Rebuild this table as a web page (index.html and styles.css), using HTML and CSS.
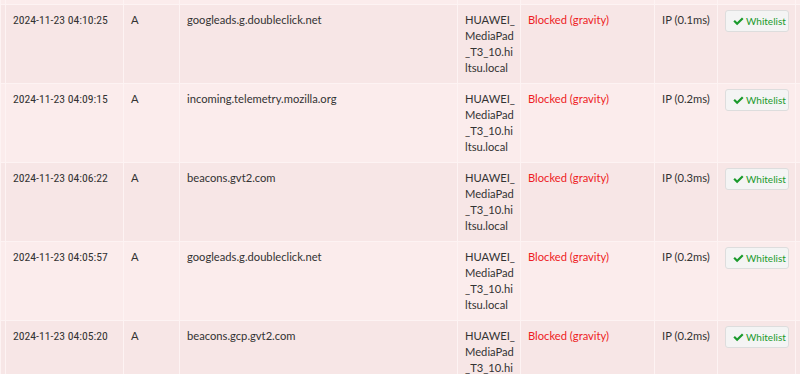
FILE: index.html
```html
<!DOCTYPE html>
<html>
<head>
<meta charset="utf-8">
<link rel="stylesheet" href="styles.css">
</head>
<body>
<table class="log">
  <colgroup>
    <col class="c-edge"><col class="c-time"><col class="c-type"><col class="c-domain"><col class="c-client"><col class="c-status"><col class="c-reply"><col class="c-action"><col class="c-rest">
  </colgroup>
  <tbody>
    <tr class="even stub"><td></td><td></td><td></td><td></td><td></td><td></td><td></td><td></td><td></td></tr>
    <tr class="odd">
      <td></td><td class="time">2024-11-23 04:10:25</td><td>A</td><td>googleads.g.doubleclick.net</td>
      <td class="client">HUAWEI_<br>MediaPad<br>_T3_10.hi<br>ltsu.local</td>
      <td class="blocked">Blocked (gravity)</td><td>IP (0.1ms)</td>
      <td class="act"><button class="wl"><svg class="chk" viewBox="0 0 12 9"><path d="M0.4 4.6 L2.1 2.9 L4.5 5.3 L9.8 0 L11.5 1.7 L4.5 8.7 Z"/></svg>Whitelist</button></td><td></td>
    </tr>
    <tr class="even">
      <td></td><td class="time">2024-11-23 04:09:15</td><td>A</td><td>incoming.telemetry.mozilla.org</td>
      <td class="client">HUAWEI_<br>MediaPad<br>_T3_10.hi<br>ltsu.local</td>
      <td class="blocked">Blocked (gravity)</td><td>IP (0.2ms)</td>
      <td class="act"><button class="wl"><svg class="chk" viewBox="0 0 12 9"><path d="M0.4 4.6 L2.1 2.9 L4.5 5.3 L9.8 0 L11.5 1.7 L4.5 8.7 Z"/></svg>Whitelist</button></td><td></td>
    </tr>
    <tr class="odd">
      <td></td><td class="time">2024-11-23 04:06:22</td><td>A</td><td>beacons.gvt2.com</td>
      <td class="client">HUAWEI_<br>MediaPad<br>_T3_10.hi<br>ltsu.local</td>
      <td class="blocked">Blocked (gravity)</td><td>IP (0.3ms)</td>
      <td class="act"><button class="wl"><svg class="chk" viewBox="0 0 12 9"><path d="M0.4 4.6 L2.1 2.9 L4.5 5.3 L9.8 0 L11.5 1.7 L4.5 8.7 Z"/></svg>Whitelist</button></td><td></td>
    </tr>
    <tr class="even">
      <td></td><td class="time">2024-11-23 04:05:57</td><td>A</td><td>googleads.g.doubleclick.net</td>
      <td class="client">HUAWEI_<br>MediaPad<br>_T3_10.hi<br>ltsu.local</td>
      <td class="blocked">Blocked (gravity)</td><td>IP (0.2ms)</td>
      <td class="act"><button class="wl"><svg class="chk" viewBox="0 0 12 9"><path d="M0.4 4.6 L2.1 2.9 L4.5 5.3 L9.8 0 L11.5 1.7 L4.5 8.7 Z"/></svg>Whitelist</button></td><td></td>
    </tr>
    <tr class="odd">
      <td></td><td class="time">2024-11-23 04:05:20</td><td>A</td><td>beacons.gcp.gvt2.com</td>
      <td class="client">HUAWEI_<br>MediaPad<br>_T3_10.hi<br>ltsu.local</td>
      <td class="blocked">Blocked (gravity)</td><td>IP (0.2ms)</td>
      <td class="act"><button class="wl"><svg class="chk" viewBox="0 0 12 9"><path d="M0.4 4.6 L2.1 2.9 L4.5 5.3 L9.8 0 L11.5 1.7 L4.5 8.7 Z"/></svg>Whitelist</button></td><td></td>
    </tr>
  </tbody>
</table>
</body>
</html>
```
FILE: styles.css
```css
html, body {
  margin: 0;
  padding: 0;
  background: #fbeaea;
  overflow: hidden;
}
.log {
  border-collapse: collapse;
  table-layout: fixed;
  width: 805px;
  font-family: Lato, "Open Sans", sans-serif;
  font-size: 11.2px;
  line-height: 16px;
  color: #333;
}
.c-edge { width: 5px; }
.c-time { width: 118px; }
.c-type { width: 56px; }
.c-domain { width: 278px; }
.c-client { width: 63px; }
.c-status { width: 134px; }
.c-reply { width: 63px; }
.c-action { width: 78px; }
.c-rest { width: 10px; }
.log td {
  border: 1px solid #fdf3f3;
  padding: 7px 0 7px 7px;
  vertical-align: top;
  height: 64px;
  overflow: hidden;
  white-space: nowrap;
}
.log td:first-child { padding: 0; }
.log tr.stub td { height: 4px; padding: 0; border-top: 0; }
.odd td { background: #f7e6e6; }
.even td { background: #fbecec; }
.log td.time {
  font-family: "Roboto Condensed", Lato, sans-serif;
  font-size: 11.7px;
}
.blocked { color: #ee1c24; }
.log td.act { padding-top: 5px; }
.wl {
  display: flex;
  align-items: center;
  gap: 2px;
  width: 64px;
  height: 22px;
  padding: 0 0 0 7px;
  background: #f4f4f4;
  border: 1px solid #dddddd;
  border-radius: 3px;
  font-family: Lato, "Open Sans", sans-serif;
  font-size: 10px;
  color: #1a9a2c;
}
.chk {
  width: 11px;
  height: 9px;
  fill: #1a9a2c;
}
```
